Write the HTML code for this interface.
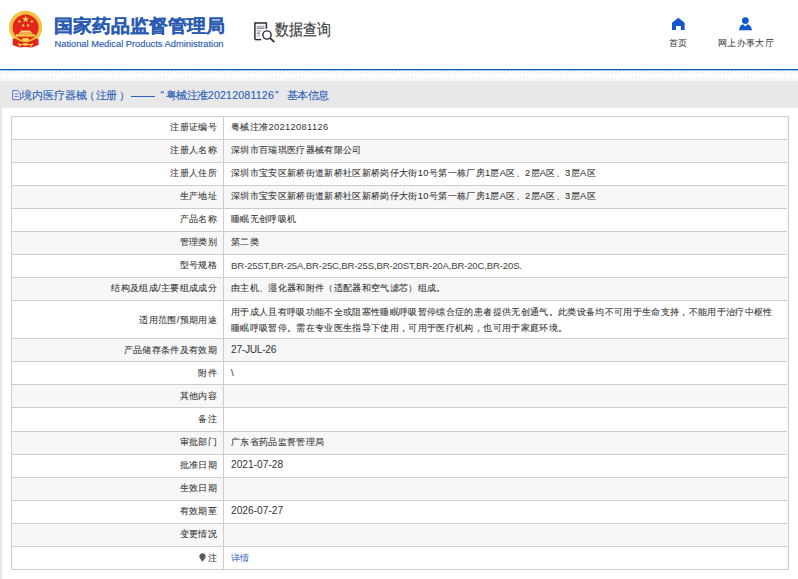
<!DOCTYPE html>
<html><head><meta charset="utf-8">
<style>
*{margin:0;padding:0;box-sizing:border-box}
html,body{width:798px;height:579px;overflow:hidden;background:#fff;font-family:"Liberation Sans",sans-serif}
#hdr{position:absolute;left:0;top:0;width:798px;height:69px;background:#fff}
#emb{position:absolute;left:8px;top:10px;width:36px;height:39px}
#t1{position:absolute;left:54px;top:14.5px;font-size:19px;font-weight:bold;color:#2a5bb3;white-space:nowrap;line-height:24px;-webkit-text-stroke:0.25px #2a5bb3;transform:scaleY(0.95);transform-origin:0 0}
#t2{position:absolute;left:54.5px;top:38.5px;font-size:9.3px;color:#2a5bb3;-webkit-text-stroke:0.15px #2a5bb3;white-space:nowrap;line-height:10px}
#sq{position:absolute;left:254px;top:22px;width:24px;height:23px}
#sqt{position:absolute;left:275px;top:18.4px;font-size:14px;color:#404040;-webkit-text-stroke:0.15px #404040;white-space:nowrap;line-height:20px;transform:scaleY(1.14);transform-origin:0 0}
.nav{position:absolute;top:36.5px;font-size:9.34px;letter-spacing:0.34px;color:#333;white-space:nowrap;line-height:12px}
#blue{position:absolute;left:0;top:69px;width:798px;height:1px;background:#0b5cc0;box-shadow:0 1px 0 rgba(11,92,192,0.35)}
#dots{position:absolute;left:0;top:71px;width:798px;height:2.5px;background:repeating-linear-gradient(135deg,#fff 0,#fff 1.4px,#ebebeb 1.5px,#ebebeb 2.4px)}
#grad{position:absolute;left:0;top:75px;width:798px;height:6px;background:linear-gradient(#fff,#f4f4f4)}
#band{position:absolute;left:0;top:81px;width:798px;height:26px;background:#e8e8e8;box-shadow:0 1px 0 #ebeef5}
#bt{position:absolute;left:0;top:87.6px;font-size:10.6px;color:#2c5fb8;white-space:nowrap;line-height:15px}
#bt span{position:absolute;top:0;-webkit-text-stroke:0.12px #2c5fb8}
#lstrip{position:absolute;left:0;top:108px;width:1.5px;height:471px;background:#e6e6e6}
table{position:absolute;left:11px;top:115.5px;width:778px;border-collapse:collapse;font-size:9.34px;letter-spacing:0.34px;color:#333;-webkit-text-stroke:0.08px #333}
td{border:1px solid #cdcdcd;height:23.07px;padding:0;line-height:15px;vertical-align:middle}
td.l{width:212px;text-align:right;padding-right:6px}
td.v{padding-left:7px}
tr:nth-child(even) td{background:#f7f7f7}
tr.last td{padding-top:2px}
tr.dbl td{height:38.3px;line-height:16px}
a{color:#3a7ef0;text-decoration:none}
.n{-webkit-text-stroke:0}
.e{-webkit-text-stroke:0;font-size:10.2px;letter-spacing:0;position:relative;top:-0.3px}
</style></head><body>
<div id="hdr">
  <svg style="position:absolute;left:0;top:0;width:50px;height:50px" viewBox="0 0 50 50">
    <circle cx="25.6" cy="27.4" r="16.6" fill="#f2c042"/>
    <circle cx="25.6" cy="27.6" r="13" fill="#e2261d"/>
    <path d="M12.8 38.8 Q18 37.8 19 38.5 L32.2 38.5 Q33.2 37.8 38.4 38.8 L38.6 45 L31.7 47.6 L25.6 46.9 L19.5 47.6 L12.6 45 Z" fill="#e0261c"/>
    <path d="M13.9 36.4 Q25.6 46.2 37.3 36.4" fill="none" stroke="#f5c93e" stroke-width="1.7"/>
    <ellipse cx="25.6" cy="39.5" rx="3.6" ry="1.4" fill="#f7d24a"/>
    <ellipse cx="25.6" cy="44.4" rx="2.7" ry="1.3" fill="#f7d24a"/>
    <path d="M18.2 43.3 L20.4 46.6 M33 43.3 L30.8 46.6 M19.5 44.2 Q22 45 23 44.4 M31.7 44.2 Q29.2 45 28.2 44.4" stroke="#f7d24a" stroke-width="1.1" fill="none"/>
    <polygon points="25.6,15.6 26.5,18.1 29.1,18.1 27,19.7 27.8,22.2 25.6,20.7 23.4,22.2 24.2,19.7 22.1,18.1 24.7,18.1" fill="#f8d348"/>
    <circle cx="19.4" cy="21.4" r="1.2" fill="#f8d348"/><circle cx="31.8" cy="21.4" r="1.2" fill="#f8d348"/>
    <circle cx="23.1" cy="25.4" r="1.2" fill="#f8d348"/><circle cx="28.1" cy="25.4" r="1.2" fill="#f8d348"/>
    <rect x="20.6" y="30.6" width="10" height="1.5" fill="#f8dc7a"/>
    <rect x="19.2" y="32.2" width="13" height="1.6" fill="#f5c95a"/>
    <rect x="15.9" y="34.2" width="19.2" height="2.4" fill="#f6d04e"/>
  </svg>
  <div id="t1">国家药品监督管理局</div>
  <div id="t2">National Medical Products Administration</div>
  <svg id="sq" viewBox="0 0 24 23">
    <path d="M0.9 17.6 V0.9 H12.4 V6.8" fill="none" stroke="#2b2b3c" stroke-width="1.5"/>
    <path d="M0.9 17.6 H7.3" fill="none" stroke="#2b2b3c" stroke-width="1.5"/>
    <path d="M2.6 4.2 H10.5 M2.6 9 H7.5 M2.6 13.8 H6" stroke="#9a9aa4" stroke-width="1.1"/>
    <path d="M2.6 6.1 H10.5 M2.6 11.2 H6" stroke="#3a3a4a" stroke-width="0.9"/>
    <circle cx="13" cy="13" r="4.1" fill="none" stroke="#2b2b3c" stroke-width="1.4"/>
    <path d="M16.2 16.2 L20.3 20.2" stroke="#2b2b3c" stroke-width="1.8"/>
  </svg>
  <div id="sqt">数据查询</div>
  <svg style="position:absolute;left:672px;top:17px;width:13px;height:13px" viewBox="0 0 13 13">
    <path d="M6.3 0.8 L12.6 5.8 V13 H8.9 V9 H4 V13 H0 V5.8 Z" fill="#1159cc"/>
  </svg>
  <div class="nav" style="left:669px">首页</div>
  <svg style="position:absolute;left:738px;top:16px;width:15px;height:15px" viewBox="0 0 15 15">
    <circle cx="7.3" cy="4.6" r="3.4" fill="#1159cc"/>
    <path d="M1 14.2 Q1.5 9 5 8.2 L7.3 10.5 L9.6 8.2 Q13.3 9 14 14.2 Z" fill="#1159cc"/>
  </svg>
  <div class="nav" style="left:718px">网上办事大厅</div>
</div>
<div id="blue"></div>
<div id="dots"></div>
<div id="grad"></div>
<div id="band"></div>
<svg style="position:absolute;left:12px;top:90px;width:9px;height:11px" viewBox="0 0 9 11">
  <path d="M0.6 0.5 H5.6 L8.4 3 V9.7 H0.6 Z" fill="none" stroke="#5468cc" stroke-width="0.9"/>
  <path d="M2.6 4 H6.4 M2.6 6.5 H6.4" stroke="#5468cc" stroke-width="0.8"/>
</svg>
<div id="bt">
  <span style="left:21px;letter-spacing:-0.1px">境内医疗器械</span>
  <span style="left:83.5px">（</span>
  <span style="left:95.5px;letter-spacing:-0.4px">注册</span>
  <span style="left:119px">）</span>
  <i style="position:absolute;left:131.4px;top:8px;width:23.2px;height:1.1px;background:#2e62c0"></i>
  <span style="left:160.5px">“</span>
  <span style="left:165.5px;letter-spacing:-0.4px">粤械注准</span>
  <span style="left:207.8px;letter-spacing:0.2px">20212081126</span>
  <span style="left:275px">”</span>
  <span style="left:286.5px;letter-spacing:-0.4px">基本信息</span>
</div>
<div id="lstrip"></div>
<table>
<tr><td class="l">注册证编号</td><td class="v">粤械注准<span class="n">20212081126</span></td></tr>
<tr><td class="l">注册人名称</td><td class="v">深圳市百瑞琪医疗器械有限公司</td></tr>
<tr><td class="l">注册人住所</td><td class="v">深圳市宝安区新桥街道新桥社区新桥岗仔大街10号第一栋厂房1层A区、2层A区、3层A区</td></tr>
<tr><td class="l">生产地址</td><td class="v">深圳市宝安区新桥街道新桥社区新桥岗仔大街10号第一栋厂房1层A区、2层A区、3层A区</td></tr>
<tr><td class="l">产品名称</td><td class="v">睡眠无创呼吸机</td></tr>
<tr><td class="l">管理类别</td><td class="v">第二类</td></tr>
<tr><td class="l">型号规格</td><td class="v"><span class="e" style="font-size:9.6px;letter-spacing:-0.17px;color:#444">BR-25ST,BR-25A,BR-25C,BR-25S,BR-20ST,BR-20A,BR-20C,BR-20S.</span></td></tr>
<tr><td class="l">结构及组成/主要组成成分</td><td class="v">由主机、湿化器和附件（适配器和空气滤芯）组成。</td></tr>
<tr class="dbl"><td class="l">适用范围/预期用途</td><td class="v">用于成人且有呼吸功能不全或阻塞性睡眠呼吸暂停综合症的患者提供无创通气。此类设备均不可用于生命支持，不能用于治疗中枢性<br>睡眠呼吸暂停。需在专业医生指导下使用，可用于医疗机构，也可用于家庭环境。</td></tr>
<tr><td class="l">产品储存条件及有效期</td><td class="v"><span class="e" style="letter-spacing:-0.27px">27-JUL-26</span></td></tr>
<tr><td class="l">附件</td><td class="v">\</td></tr>
<tr><td class="l">其他内容</td><td class="v"></td></tr>
<tr><td class="l">备注</td><td class="v"></td></tr>
<tr><td class="l">审批部门</td><td class="v">广东省药品监督管理局</td></tr>
<tr><td class="l">批准日期</td><td class="v"><span class="e">2021-07-28</span></td></tr>
<tr><td class="l">生效日期</td><td class="v"></td></tr>
<tr><td class="l">有效期至</td><td class="v"><span class="e">2026-07-27</span></td></tr>
<tr><td class="l">变更情况</td><td class="v"></td></tr>
<tr class="last"><td class="l"><svg width="7" height="9" viewBox="0 0 7 9" style="vertical-align:-1px;margin-right:1.5px"><path d="M3.5 0.3 C1.6 0.3 0.3 1.7 0.3 3.4 C0.3 5.2 2.3 6.6 3.5 8.8 C4.7 6.6 6.7 5.2 6.7 3.4 C6.7 1.7 5.4 0.3 3.5 0.3 Z" fill="#5a5a5a"/></svg>注</td><td class="v"><a>详情</a></td></tr>
</table>
<div style="position:absolute;left:787px;top:117px;width:1px;height:452px;background:#f6f8fd"></div>
</body></html>
